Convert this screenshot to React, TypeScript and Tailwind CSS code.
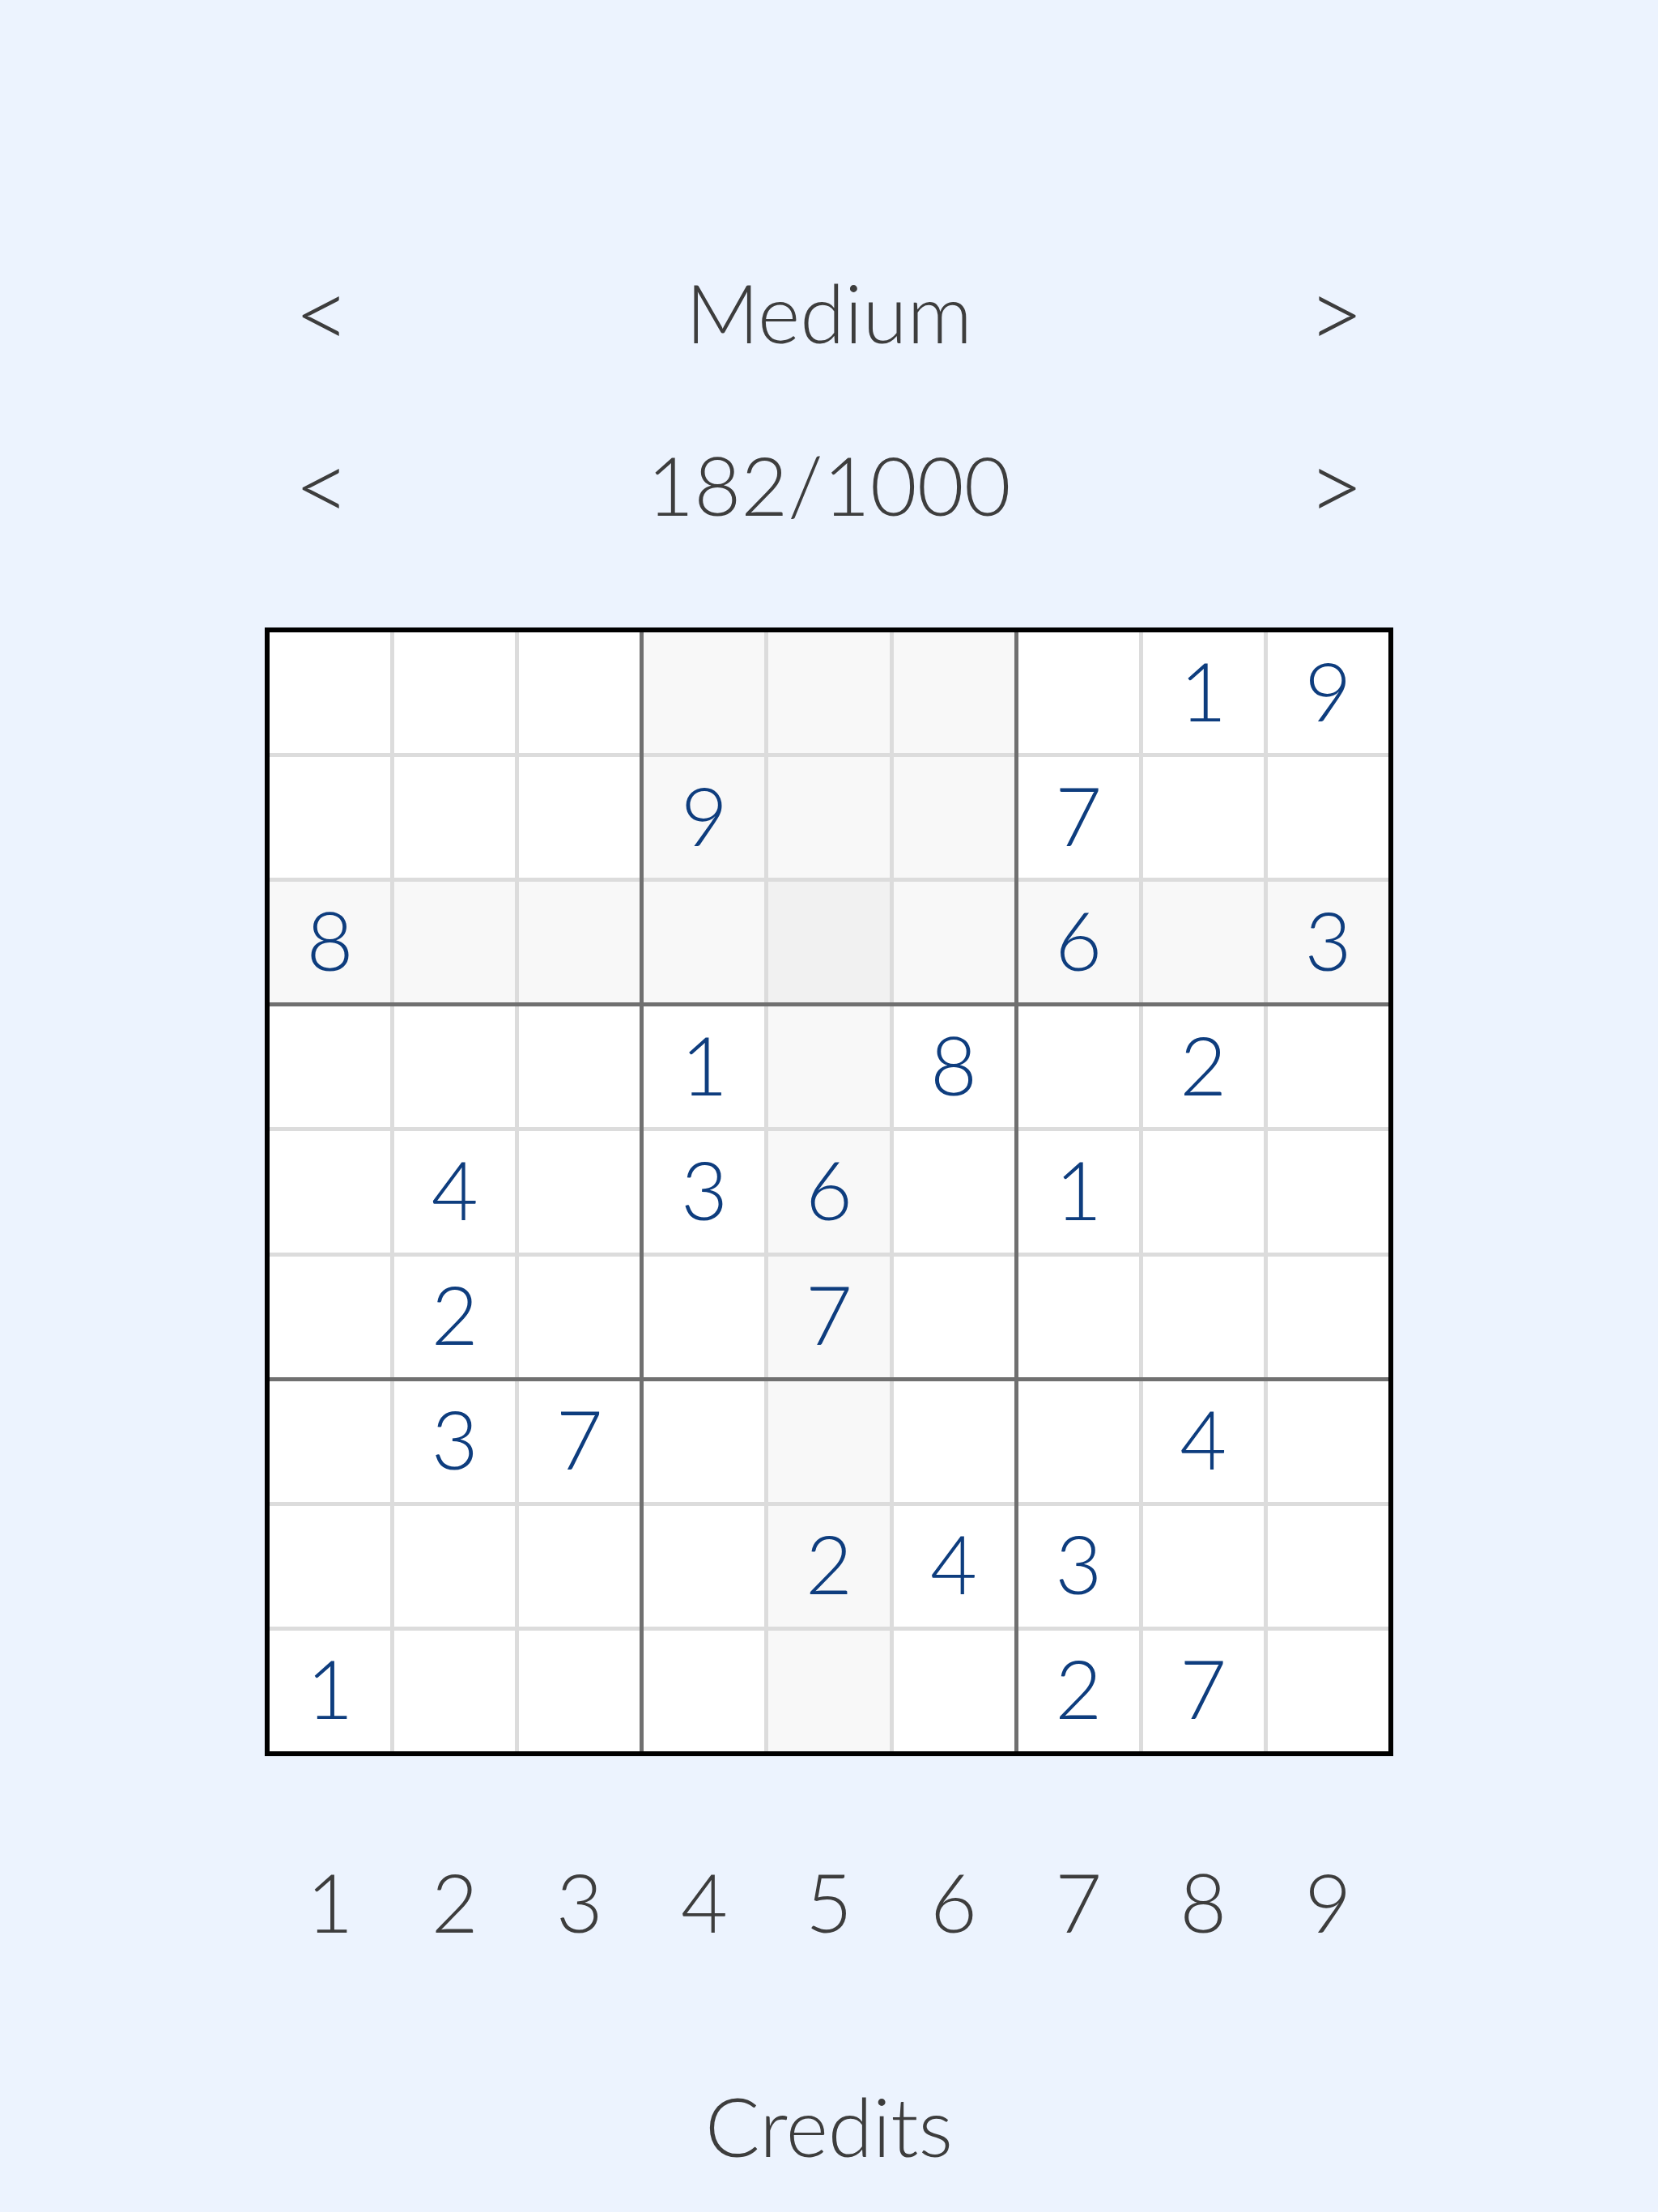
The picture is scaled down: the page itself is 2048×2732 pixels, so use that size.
import React from "react";

const PUZZLE: (number | null)[][] = [
  [null, null, null, null, null, null, null, 1, 9],
  [null, null, null, 9, null, null, 7, null, null],
  [8, null, null, null, null, null, 6, null, 3],
  [null, null, null, 1, null, 8, null, 2, null],
  [null, 4, null, 3, 6, null, 1, null, null],
  [null, 2, null, null, 7, null, null, null, null],
  [null, 3, 7, null, null, null, null, 4, null],
  [null, null, null, null, 2, 4, 3, null, null],
  [1, null, null, null, null, null, 2, 7, null],
];

// selected cell
const SEL = { r: 2, c: 4 };

function cellBg(r: number, c: number) {
  if (r === SEL.r && c === SEL.c) return "bg-[#f1f1f1]";
  const sameBox =
    Math.floor(r / 3) === Math.floor(SEL.r / 3) &&
    Math.floor(c / 3) === Math.floor(SEL.c / 3);
  if (r === SEL.r || c === SEL.c || sameBox) return "bg-[#f8f8f8]";
  return "bg-white";
}

const font = "font-['Lato','Open_Sans',sans-serif] font-light";

function NavRow({ label }: { label: string }) {
  return (
    <div className="flex w-[1394px] h-[130px] items-center text-[#3d3d3d]">
      <div className="w-[142px] text-center text-[120px] leading-none">&lt;</div>
      <div className="flex-1 text-center text-[100px] leading-none">{label}</div>
      <div className="w-[142px] text-center text-[120px] leading-none">&gt;</div>
    </div>
  );
}

export default function App() {
  return (
    <div
      className={`min-h-[2732px] w-full bg-[#ecf3fe] flex flex-col items-center pt-[320px] ${font}`}
    >
      <NavRow label="Medium" />
      <div className="mt-[83px]">
        <NavRow label="182/1000" />
      </div>

      {/* board */}
      <div className="mt-[112px] w-[1394px] h-[1394px] border-[6px] border-black bg-[#707070] grid grid-cols-3 grid-rows-3 gap-[5px]">
        {[0, 1, 2].map((br) =>
          [0, 1, 2].map((bc) => (
            <div
              key={`${br}-${bc}`}
              className="bg-[#dcdcdc] grid grid-cols-3 grid-rows-3 gap-[5px]"
            >
              {[0, 1, 2].map((ir) =>
                [0, 1, 2].map((ic) => {
                  const r = br * 3 + ir;
                  const c = bc * 3 + ic;
                  const v = PUZZLE[r][c];
                  return (
                    <div
                      key={`${ir}-${ic}`}
                      className={`${cellBg(r, c)} flex items-center justify-center pb-[8px] text-[100px] leading-none text-[#0e3d7e]`}
                    >
                      {v ?? ""}
                    </div>
                  );
                })
              )}
            </div>
          ))
        )}
      </div>

      {/* number picker */}
      <div className="mt-[114px] w-[1382px] h-[130px] grid grid-cols-9 gap-[5px] items-center text-[#3d3d3d]">
        {[1, 2, 3, 4, 5, 6, 7, 8, 9].map((n) => (
          <div key={n} className="text-center text-[100px] leading-none">
            {n}
          </div>
        ))}
      </div>

      <div className="mt-[147px] h-[130px] flex items-center text-[100px] leading-none text-[#3d3d3d]">
        Credits
      </div>
    </div>
  );
}
